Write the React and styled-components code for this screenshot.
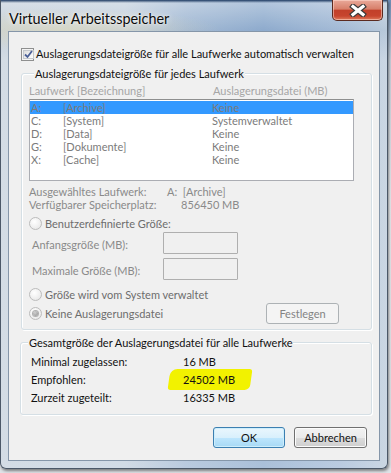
import React from "react";
import styled, { createGlobalStyle, css } from "styled-components";

const Global = createGlobalStyle`
  html, body { margin: 0; padding: 0; }
  body {
    width: 391px; height: 473px; overflow: hidden;
    background: linear-gradient(180deg, #6f8fb8 0px, #c9d3dd 60px, #e9ecef 200px, #dfe3e7 473px);
    font-family: Lato, "Open Sans", sans-serif;
    font-size: 11px;
    color: #000;
  }
  #root { width: 391px; height: 473px; }
`;

const Window = styled.div`
  width: 388px;
  height: 469px;
  box-sizing: border-box;
  display: flex;
  flex-direction: column;
  padding: 0 7px 7px;
  border: 1px solid #4b5868;
  border-top: none;
  border-radius: 0 0 6px 6px;
  background:
    linear-gradient(180deg, #1d3a62 0px, rgba(40,70,110,0) 3px),
    radial-gradient(ellipse 160px 22px at 60px 30px, rgba(230,220,180,0.55), rgba(230,220,180,0)),
    linear-gradient(180deg, rgba(255,255,255,0.35) 0px, rgba(255,255,255,0) 30px, rgba(255,255,255,0.25) 60px),
    linear-gradient(90deg, #c4d0dc 0%, #c2cfdd 32%, #a2b9d4 48%, #8eabcd 68%, #a3bad6 88%, #b9c9da 100%);
  box-shadow: 1px 2px 3px rgba(0,0,0,0.45);
`;

const TitleBar = styled.div`
  height: 31px;
  display: flex;
  align-items: flex-start;
`;

const Title = styled.div`
  font-family: Lato, "Open Sans", sans-serif;
  font-size: 14.4px;
  line-height: 20px;
  margin: 9px 0 0 1px;
  color: #0b0b0b;
  text-shadow: 0 0 6px rgba(255,255,255,0.9), 0 0 2px rgba(255,255,255,0.8);
`;

const CloseButton = styled.div`
  margin-left: auto;
  margin-right: -3px;
  width: 51px;
  height: 21px;
  box-sizing: border-box;
  border: 1px solid #5b2a20;
  border-top: none;
  border-radius: 0 0 5px 5px;
  background: linear-gradient(180deg, #e9a99a 0%, #d77f6a 45%, #c2402a 52%, #c7452e 80%, #df7a5c 100%);
  box-shadow: inset 0 0 0 1px rgba(255,220,210,0.55);
  display: flex;
  align-items: center;
  justify-content: center;
`;

const Client = styled.div`
  flex: 1;
  box-sizing: border-box;
  background: #f0f0f0;
  border: 1px solid #8596a9;
  display: flex;
  flex-direction: column;
  padding: 14px 0 0 12px;
`;

const CheckRow = styled.div`
  display: flex;
  align-items: center;
  height: 16px;
  gap: 2px;
`;

const CheckBox = styled.div`
  width: 13px;
  height: 13px;
  box-sizing: border-box;
  border: 1px solid #8e8f8f;
  background: #f4f4f4;
  padding: 1px;
  display: flex;
  & > div {
    flex: 1;
    border: 1px solid #c4c8cc;
    background: linear-gradient(135deg, #dcdcdc, #ffffff);
    display: flex; align-items: center; justify-content: center;
  }
`;

const Label = styled.span`
  line-height: ${p => p.$lh || 16}px;
  white-space: nowrap;
  color: ${p => (p.$tone === "mid" ? "#6d6d6d" : "#111")};
`;

const Group = styled.div`
  box-sizing: border-box;
  width: ${p => p.$w}px;
  margin-top: ${p => p.$mt}px;
  margin-left: ${p => p.$ml || 0}px;
  border: 1px solid #d5dfe5;
  border-radius: 3px;
  box-shadow: inset 1px 1px 0 #fff, 1px 1px 0 #fff;
  display: flex;
  flex-direction: column;
  padding: 0 ${p => p.$px}px ${p => p.$pb}px;
`;

const Legend = styled.div`
  align-self: flex-start;
  margin: -8px 0 0 ${p => p.$ml}px;
  padding: 0 1px;
  background: #f0f0f0;
  line-height: 15px;
  color: #111;
  white-space: nowrap;
`;

const HeaderRow = styled.div`
  display: grid;
  grid-template-columns: 184px 1fr;
  margin-top: 3px;
  line-height: 14px;
  color: #a6a6a6;
`;

const ListBox = styled.div`
  box-sizing: border-box;
  width: 325px;
  height: 82px;
  margin-top: 1px;
  border: 1px solid #abadb3;
  border-top-color: #8e8f8f;
  background: #fff;
  padding: 1px 0 0;
`;

const ListRow = styled.div`
  display: grid;
  grid-template-columns: 32px 149px 1fr;
  height: 13px;
  line-height: 13px;
  padding-left: 1px;
  color: #7b7b7b;
  ${p => p.$sel && css`background: #3399ff;`}
`;

const InfoRow = styled.div`
  display: flex;
  line-height: 13px;
  color: #8a8a8a;
  margin-top: ${p => p.$mt || 0}px;
`;

const InfoLabel = styled.span`
  width: ${p => p.$w}px;
  flex: none;
`;

const RadioRow = styled.div`
  display: flex;
  align-items: center;
  gap: 3px;
  height: ${p => p.$h || 13}px;
  margin-top: ${p => p.$mt}px;
  margin-right: ${p => p.$mr || 0}px;
`;

const Radio = styled.div`
  width: 13px;
  height: 13px;
  box-sizing: border-box;
  border-radius: 50%;
  border: 1px solid #bcbcbc;
  background: radial-gradient(circle at 40% 35%, #ffffff 0%, #f4f4f4 40%, #e2e2e2 100%);
  display: flex;
  align-items: center;
  justify-content: center;
  flex: none;
  &::after {
    content: "";
    display: ${p => (p.$on ? "block" : "none")};
    width: 5px;
    height: 5px;
    border-radius: 50%;
    background: radial-gradient(circle at 40% 35%, #d0d0d0, #8f8f8f);
    box-shadow: 0 0 0 1px #b0b0b0;
  }
`;

const FieldRow = styled.div`
  display: flex;
  align-items: center;
  height: 22px;
  margin-top: ${p => p.$mt}px;
  padding-left: 3px;
`;

const FieldLabel = styled.span`
  width: 131px;
  flex: none;
  color: #8a8a8a;
  line-height: 14px;
  padding-top: 3px;
`;

const Field = styled.div`
  width: 75px;
  height: 22px;
  box-sizing: border-box;
  border: 1px solid #afafaf;
  border-radius: 1px;
  background: #f0f0f0;
`;

const Button = styled.div`
  box-sizing: border-box;
  width: ${p => p.$w}px;
  height: 21px;
  border-radius: 3px;
  display: flex;
  align-items: center;
  justify-content: center;
  margin-left: ${p => (p.$push ? "auto" : "0")};
  ${p =>
    p.$disabled
      ? css`
          border: 1px solid #adb2b5;
          background: #f4f4f4;
          color: #838383;
        `
      : p.$default
      ? css`
          border: 1px solid #3c7fb1;
          background: linear-gradient(180deg, #eaf6fd 0%, #d9f0fc 50%, #bee6fd 51%, #a7d9f5 100%);
          box-shadow: inset 0 0 0 1px #cdeefc;
          color: #111;
        `
      : css`
          border: 1px solid #707070;
          background: linear-gradient(180deg, #f2f2f2 0%, #ebebeb 50%, #dddddd 51%, #cfcfcf 100%);
          box-shadow: inset 0 0 0 1px #fcfcfc;
          color: #111;
        `}
`;

const SummaryRow = styled.div`
  display: flex;
  line-height: 18px;
  color: #111;
  margin-top: ${p => p.$mt || 0}px;
`;

const Marked = styled.span`
  position: relative;
  z-index: 0;
  &::before {
    content: "";
    position: absolute;
    z-index: -1;
    left: -14px;
    right: -16px;
    top: -2px;
    bottom: -1px;
    background: #f2f200;
    border-radius: 7px 3px 5px 3px;
    transform: skewX(-8deg);
  }
`;

const ButtonRow = styled.div`
  display: flex;
  justify-content: flex-end;
  margin-top: 12px;
  padding-right: 12px;
  gap: 9px;
`;

const drives = [
  ["A:", "[Archive]", "Keine", true],
  ["C:", "[System]", "Systemverwaltet"],
  ["D:", "[Data]", "Keine"],
  ["G:", "[Dokumente]", "Keine"],
  ["X:", "[Cache]", "Keine"],
];

export default function App() {
  return (
    <>
      <Global />
      <Window>
        <TitleBar>
          <Title>Virtueller Arbeitsspeicher</Title>
          <CloseButton>
            <svg width="18" height="13" viewBox="0 0 18 13">
              <path d="M4 2.5 L14 10.5 M14 2.5 L4 10.5" stroke="#3a3a3a" strokeWidth="5.5" strokeLinecap="square" />
              <path d="M4 2.5 L14 10.5 M14 2.5 L4 10.5" stroke="#ffffff" strokeWidth="3.2" strokeLinecap="square" />
            </svg>
          </CloseButton>
        </TitleBar>
        <Client>
          <CheckRow>
            <CheckBox>
              <div>
                <svg width="9" height="9" viewBox="0 0 9 9">
                  <path d="M1 4.5 L3.5 7 L8 1" fill="none" stroke="#4a5f97" strokeWidth="1.8" />
                </svg>
              </div>
            </CheckBox>
            <Label>Auslagerungsdateigröße für alle Laufwerke automatisch verwalten</Label>
          </CheckRow>

          <Group $w={351} $mt={11} $px={7} $pb={5}>
            <Legend $ml={5}>Auslagerungsdateigröße für jedes Laufwerk</Legend>
            <HeaderRow>
              <span>Laufwerk [Bezeichnung]</span>
              <span>Auslagerungsdatei (MB)</span>
            </HeaderRow>
            <ListBox>
              {drives.map(([l, n, v, sel]) => (
                <ListRow key={l} $sel={sel}>
                  <span>{l}</span>
                  <span>{n}</span>
                  <span>{v}</span>
                </ListRow>
              ))}
            </ListBox>
            <InfoRow $mt={4}>
              <InfoLabel $w={138}>Ausgewähltes Laufwerk:</InfoLabel>
              <span>A:&nbsp; [Archive]</span>
            </InfoRow>
            <InfoRow>
              <InfoLabel $w={152}>Verfügbarer Speicherplatz:</InfoLabel>
              <span>856450 MB</span>
            </InfoRow>
            <RadioRow $mt={6}>
              <Radio />
              <Label $lh={13} $tone="mid">Benutzerdefinierte Größe:</Label>
            </RadioRow>
            <FieldRow $mt={2}>
              <FieldLabel>Anfangsgröße (MB):</FieldLabel>
              <Field />
            </FieldRow>
            <FieldRow $mt={4}>
              <FieldLabel>Maximale Größe (MB):</FieldLabel>
              <Field />
            </FieldRow>
            <RadioRow $mt={8}>
              <Radio />
              <Label $lh={13} $tone="mid">Größe wird vom System verwaltet</Label>
            </RadioRow>
            <RadioRow $mt={2} $h={21} $mr={25}>
              <Radio $on />
              <Label $lh={13} $tone="mid">Keine Auslagerungsdatei</Label>
              <Button $w={73} $disabled $push>Festlegen</Button>
            </RadioRow>
          </Group>

          <Group $w={352} $mt={12} $ml={-1} $px={10} $pb={7}>
            <Legend $ml={-3}>Gesamtgröße der Auslagerungsdatei für alle Laufwerke</Legend>
            <SummaryRow $mt={3}>
              <InfoLabel $w={152}>Minimal zugelassen:</InfoLabel>
              <span>16 MB</span>
            </SummaryRow>
            <SummaryRow>
              <InfoLabel $w={152}>Empfohlen:</InfoLabel>
              <Marked>24502 MB</Marked>
            </SummaryRow>
            <SummaryRow>
              <InfoLabel $w={152}>Zurzeit zugeteilt:</InfoLabel>
              <span>16335 MB</span>
            </SummaryRow>
          </Group>

          <ButtonRow>
            <Button $w={72} $default>OK</Button>
            <Button $w={73}>Abbrechen</Button>
          </ButtonRow>
        </Client>
      </Window>
    </>
  );
}
